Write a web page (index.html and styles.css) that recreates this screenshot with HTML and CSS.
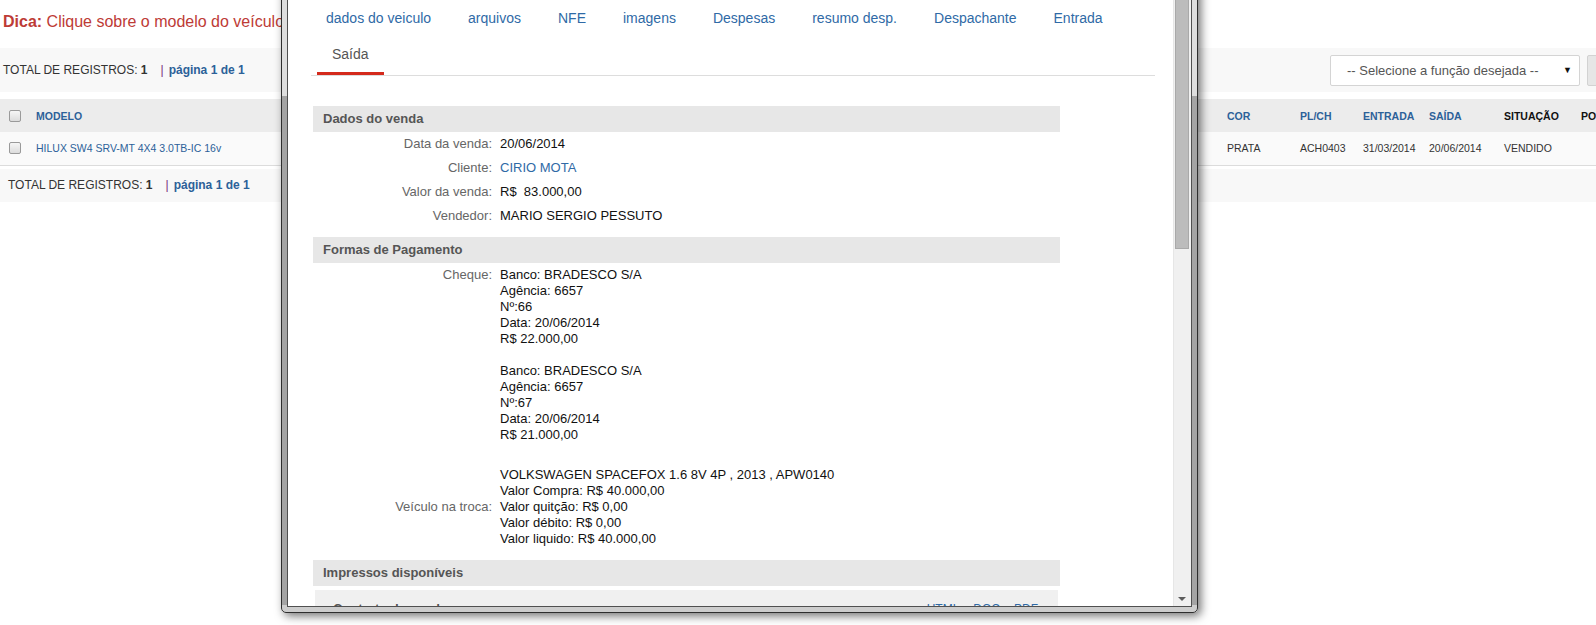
FILE: index.html
```html
<!DOCTYPE html>
<html lang="pt-BR">
<head>
<meta charset="utf-8">
<title>Veículos</title>
<link rel="stylesheet" href="styles.css">
</head>
<body>
<div class="page">
  <p class="tip"><b>Dica:</b> Clique sobre o modelo do veículo para ver detalhes.</p>

  <div class="toolbar">
    <div class="count">TOTAL DE REGISTROS: <b>1</b><span class="sep">|</span><a class="pg">página 1 de 1</a></div>
    <div class="actions">
      <div class="select"><span>-- Selecione a função desejada --</span><span class="caret">▼</span></div>
      <button class="go">Executar</button>
    </div>
  </div>

  <table class="grid">
    <colgroup>
      <col class="c-chk"><col class="c-modelo"><col class="c-cor"><col class="c-pl"><col class="c-ent"><col class="c-sai"><col class="c-sit"><col class="c-po">
    </colgroup>
    <thead>
      <tr>
        <th><span class="chk"></span></th>
        <th><a>MODELO</a></th>
        <th><a>COR</a></th>
        <th><a>PL/CH</a></th>
        <th><a>ENTRADA</a></th>
        <th><a>SAÍDA</a></th>
        <th class="plain">SITUAÇÃO</th>
        <th class="plain">POSIÇÃO</th>
      </tr>
    </thead>
    <tbody>
      <tr>
        <td><span class="chk"></span></td>
        <td><a class="model">HILUX SW4 SRV-MT 4X4 3.0TB-IC 16v</a></td>
        <td>PRATA</td>
        <td>ACH0403</td>
        <td>31/03/2014</td>
        <td>20/06/2014</td>
        <td>VENDIDO</td>
        <td></td>
      </tr>
    </tbody>
  </table>

  <div class="toolbar foot">
    <div class="count">TOTAL DE REGISTROS: <b>1</b><span class="sep">|</span><a class="pg">página 1 de 1</a></div>
  </div>
</div>

<div class="window">
  <div class="win-inner">
    <div class="win-body">
      <ul class="tabs">
        <li class="tab">dados do veiculo</li>
        <li class="tab">arquivos</li>
        <li class="tab">NFE</li>
        <li class="tab">imagens</li>
        <li class="tab">Despesas</li>
        <li class="tab">resumo desp.</li>
        <li class="tab">Despachante</li>
        <li class="tab">Entrada</li>
        <li class="tab active">Saída</li>
      </ul>

      <div class="sections">
        <section class="sec">
          <h3 class="sec-title">Dados do venda</h3>
          <dl class="fields">
            <dt>Data da venda:</dt><dd>20/06/2014</dd>
            <dt>Cliente:</dt><dd><a class="link">CIRIO MOTA</a></dd>
            <dt>Valor da venda:</dt><dd>R$&nbsp; 83.000,00</dd>
            <dt>Vendedor:</dt><dd>MARIO SERGIO PESSUTO</dd>
          </dl>
        </section>

        <section class="sec">
          <h3 class="sec-title">Formas de Pagamento</h3>
          <dl class="fields">
            <dt>Cheque:</dt>
            <dd>Banco: BRADESCO S/A<br>Agência: 6657<br>Nº:66<br>Data: 20/06/2014<br>R$ 22.000,00<br><br>Banco: BRADESCO S/A<br>Agência: 6657<br>Nº:67<br>Data: 20/06/2014<br>R$ 21.000,00<br><br></dd>
            <dt class="mid">Veículo na troca:</dt>
            <dd>VOLKSWAGEN SPACEFOX 1.6 8V 4P , 2013 , APW0140<br>Valor Compra: R$ 40.000,00<br>Valor quitção: R$ 0,00<br>Valor débito: R$ 0,00<br>Valor liquido: R$ 40.000,00</dd>
          </dl>
        </section>

        <section class="sec">
          <h3 class="sec-title">Impressos disponíveis</h3>
          <div class="doc">
            <span class="doc-name">Contrato de venda</span>
            <span class="doc-links"><a>HTML</a><a>DOC</a><a>PDF</a></span>
          </div>
        </section>
      </div>
    </div>
    <div class="vscroll">
      <div class="thumb"></div>
      <div class="down"></div>
    </div>
  </div>
</div>
</body>
</html>
```

FILE: styles.css
```css
html, body {
  margin: 0;
  padding: 0;
  background: #fff;
  overflow: hidden;
}
body {
  font-family: "Liberation Sans", Arial, sans-serif;
  color: #333;
  width: 1596px;
  height: 625px;
  position: relative;
}
a { text-decoration: none; cursor: pointer; }

.page {
  width: 1660px;
}

.tip {
  margin: 0;
  padding: 12px 0 0 3px;
  font-size: 16px;
  line-height: 20px;
  color: #bd3b36;
}

.toolbar {
  margin-top: 16px;
  height: 44px;
  background: #f8f8f8;
  display: flex;
  align-items: center;
  justify-content: space-between;
  padding: 0 3px;
}
.count {
  font-size: 12px;
  color: #333;
}
.count b { color: #333; }
.sep {
  color: #7b2a7b;
  margin: 0 5px 0 13px;
}
.pg {
  color: #2c6199;
  font-weight: bold;
}

.actions {
  display: flex;
  align-items: center;
  gap: 7px;
}
.select {
  width: 250px;
  height: 31px;
  box-sizing: border-box;
  border: 1px solid #d4d4d4;
  border-radius: 2px;
  background: #fff;
  display: flex;
  align-items: center;
  justify-content: space-between;
  padding: 0 7px 0 16px;
  font-size: 13px;
  color: #555;
}
.caret {
  font-size: 9px;
  color: #111;
}
.go {
  width: 70px;
  height: 31px;
  border: 1px solid #d2d2d2;
  background: #e6e6e6;
  border-radius: 2px;
  font-family: inherit;
  font-size: 12px;
  color: #555;
}

.grid {
  margin-top: 7px;
  width: 1660px;
  table-layout: fixed;
  border-collapse: collapse;
  font-size: 10.5px;
}
.c-chk { width: 28px; }
.c-modelo { width: 1191px; }
.c-cor { width: 73px; }
.c-pl { width: 63px; }
.c-ent { width: 66px; }
.c-sai { width: 75px; }
.c-sit { width: 77px; }
.c-po { width: 87px; }

.grid th, .grid td {
  padding: 0 0 0 8px;
  text-align: left;
  white-space: nowrap;
  overflow: hidden;
}
.grid th:first-child, .grid td:first-child {
  padding-left: 9px;
}
.grid thead tr {
  height: 33px;
  background: #ececec;
}
.grid th {
  font-weight: bold;
  color: #2c6199;
}
.grid th a { color: #2c6199; }
.grid th.plain { color: #111; }
.grid tbody tr {
  height: 33px;
  background: #fafafa;
  border-bottom: 1px solid #dcdcdc;
}
.grid td { color: #333; }
.model { color: #2c6199; }

.chk {
  display: block;
  width: 12px;
  height: 12px;
  box-sizing: border-box;
  border: 1px solid #9a9a9a;
  border-radius: 2px;
  background: linear-gradient(#f6f6f6, #dcdcdc);
}

.foot {
  margin-top: 3px;
  height: 33px;
  padding-left: 8px;
}

/* modal window */
.window {
  position: absolute;
  left: 281px;
  top: -20px;
  width: 917px;
  height: 633px;
  box-sizing: border-box;
  border: 1px solid #2e2e2e;
  border-radius: 0 0 5px 5px;
  padding: 5px;
  background: linear-gradient(to bottom, #dedede 0, #dedede 115px, #a4a4a4 115px, #a4a4a4 624px, #cdcdcd 624px);
  box-shadow: 3px 3px 10px rgba(0, 0, 0, 0.55);
}
.win-inner {
  height: 100%;
  box-sizing: border-box;
  border: 1px solid #505050;
  background: #fff;
  display: flex;
  overflow: hidden;
}
.win-body {
  flex: 1;
  overflow: hidden;
  padding: 16px 18px 0 23px;
}
.vscroll {
  width: 18px;
  background: #f0f0f0;
  border-left: 1px solid #e6e6e6;
  box-sizing: border-box;
  position: relative;
}
.thumb {
  position: absolute;
  left: 1px;
  top: 0;
  width: 14px;
  height: 262px;
  box-sizing: border-box;
  background: #bcbcbc;
  border: 1px solid #a9a9a9;
}
.down {
  position: absolute;
  left: 4px;
  bottom: 5px;
  width: 0;
  height: 0;
  border-left: 4px solid transparent;
  border-right: 4px solid transparent;
  border-top: 4px solid #5c5c5c;
}

.tabs {
  list-style: none;
  margin: 0;
  padding: 0;
  width: 844px;
  display: flex;
  flex-wrap: wrap;
  column-gap: 7px;
  border-bottom: 1px solid #dddddd;
}
.tab {
  padding: 0 15px 3px;
  line-height: 30px;
  border-bottom: 3px solid transparent;
  font-size: 14px;
  color: #2f6aa6;
  white-space: nowrap;
}
.tab.active {
  color: #555;
  border-bottom-color: #d42a1c;
  margin-left: 6px;
}

.sections {
  margin-left: 2px;
  padding-top: 21px;
  width: 747px;
}
.sec-title {
  margin: 9px 0 0;
  height: 26px;
  line-height: 26px;
  padding-left: 10px;
  background: #e7e7e7;
  font-size: 13px;
  font-weight: bold;
  color: #555;
}
.fields {
  margin: 0;
  display: grid;
  grid-template-columns: 179px 1fr;
  column-gap: 8px;
  font-size: 13px;
  line-height: 16px;
}
.fields dt {
  padding: 4px 0;
  text-align: right;
  color: #666;
}
.fields dt.mid { align-self: center; }
.fields dd {
  margin: 0;
  padding: 4px 0;
  color: #111;
}
.link { color: #2f6aa6; }

.doc {
  margin: 4px 2px 0;
  background: #f0f0f0;
  padding: 11px 20px 11px 18px;
  display: flex;
  justify-content: space-between;
  font-size: 13px;
  line-height: 16px;
}
.doc-name {
  font-weight: bold;
  color: #555;
}
.doc-links {
  display: flex;
  gap: 14px;
  font-size: 12px;
}
.doc-links a { color: #2f6aa6; }
```
